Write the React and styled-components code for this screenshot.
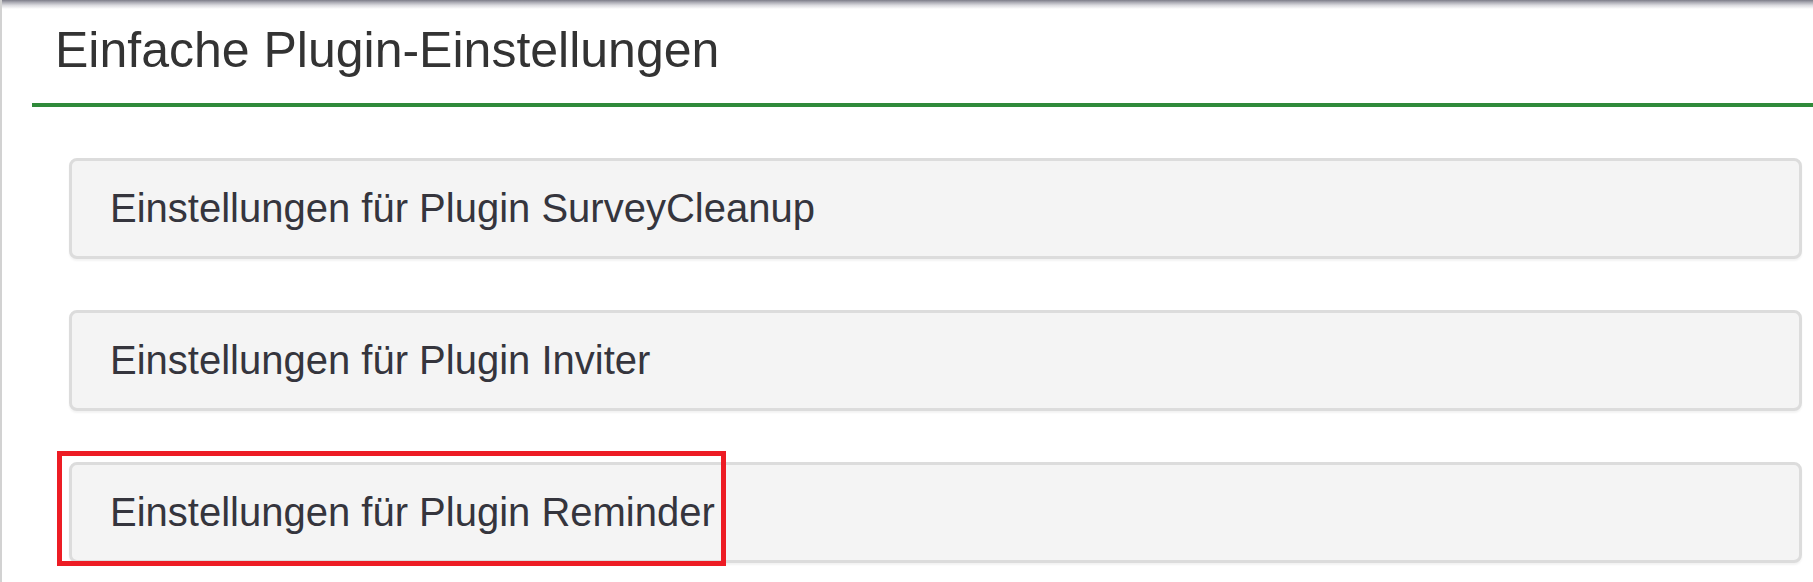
import React from "react";
import styled, { createGlobalStyle } from "styled-components";

const GlobalStyle = createGlobalStyle`
  html, body {
    margin: 0;
    padding: 0;
    background: #ffffff;
  }
  body {
    font-family: "Liberation Sans", Arial, sans-serif;
    color: #333333;
  }
  * { box-sizing: border-box; }
`;

const Page = styled.div`
  position: relative;
  min-height: 582px;
  border-left: 2px solid #d2d2d2;
  padding-left: 30px;
  padding-top: 22px;
  overflow: hidden;

  &::before {
    content: "";
    position: absolute;
    left: 0;
    right: 0;
    top: 0;
    height: 9px;
    background: linear-gradient(
      to bottom,
      #7d7d88 0%,
      #a9a9b2 25%,
      #dcdce0 60%,
      rgba(255, 255, 255, 0) 100%
    );
  }
`;

const Header = styled.div`
  border-bottom: 4px solid #2f8a3a;
  padding-left: 23px;
  padding-bottom: 25px;
`;

const Title = styled.h2`
  margin: 0;
  font-family: "Liberation Sans", Arial, sans-serif;
  font-weight: 400;
  font-size: 50px;
  line-height: 56px;
  color: #333333;
`;

const PanelList = styled.div`
  display: flex;
  flex-direction: column;
  gap: 51px;
  padding: 51px 11px 0 37px;
`;

const Panel = styled.div`
  position: relative;
  height: 101px;
  background: #f4f4f4;
  border: 3px solid #dcdcdc;
  border-radius: 8px;
  box-shadow: 0 2px 2px rgba(0, 0, 0, 0.05);
  padding: 27px 38px 0 38px;
`;

const PanelTitle = styled.div`
  font-family: "Liberation Sans", Arial, sans-serif;
  font-size: 40px;
  line-height: 40px;
  color: #35353d;
  white-space: nowrap;
`;

const Highlight = styled.div`
  position: absolute;
  left: -15px;
  top: -14px;
  width: 669px;
  height: 115px;
  border: 5px solid #ed1c24;
  pointer-events: none;
`;

const plugins = [
  { name: "SurveyCleanup", highlighted: false },
  { name: "Inviter", highlighted: false },
  { name: "Reminder", highlighted: true },
];

export default function App() {
  return (
    <>
      <GlobalStyle />
      <Page>
        <Header>
          <Title>Einfache Plugin-Einstellungen</Title>
        </Header>
        <PanelList>
          {plugins.map((p) => (
            <Panel key={p.name}>
              <PanelTitle>Einstellungen für Plugin {p.name}</PanelTitle>
              {p.highlighted && <Highlight />}
            </Panel>
          ))}
        </PanelList>
      </Page>
    </>
  );
}
